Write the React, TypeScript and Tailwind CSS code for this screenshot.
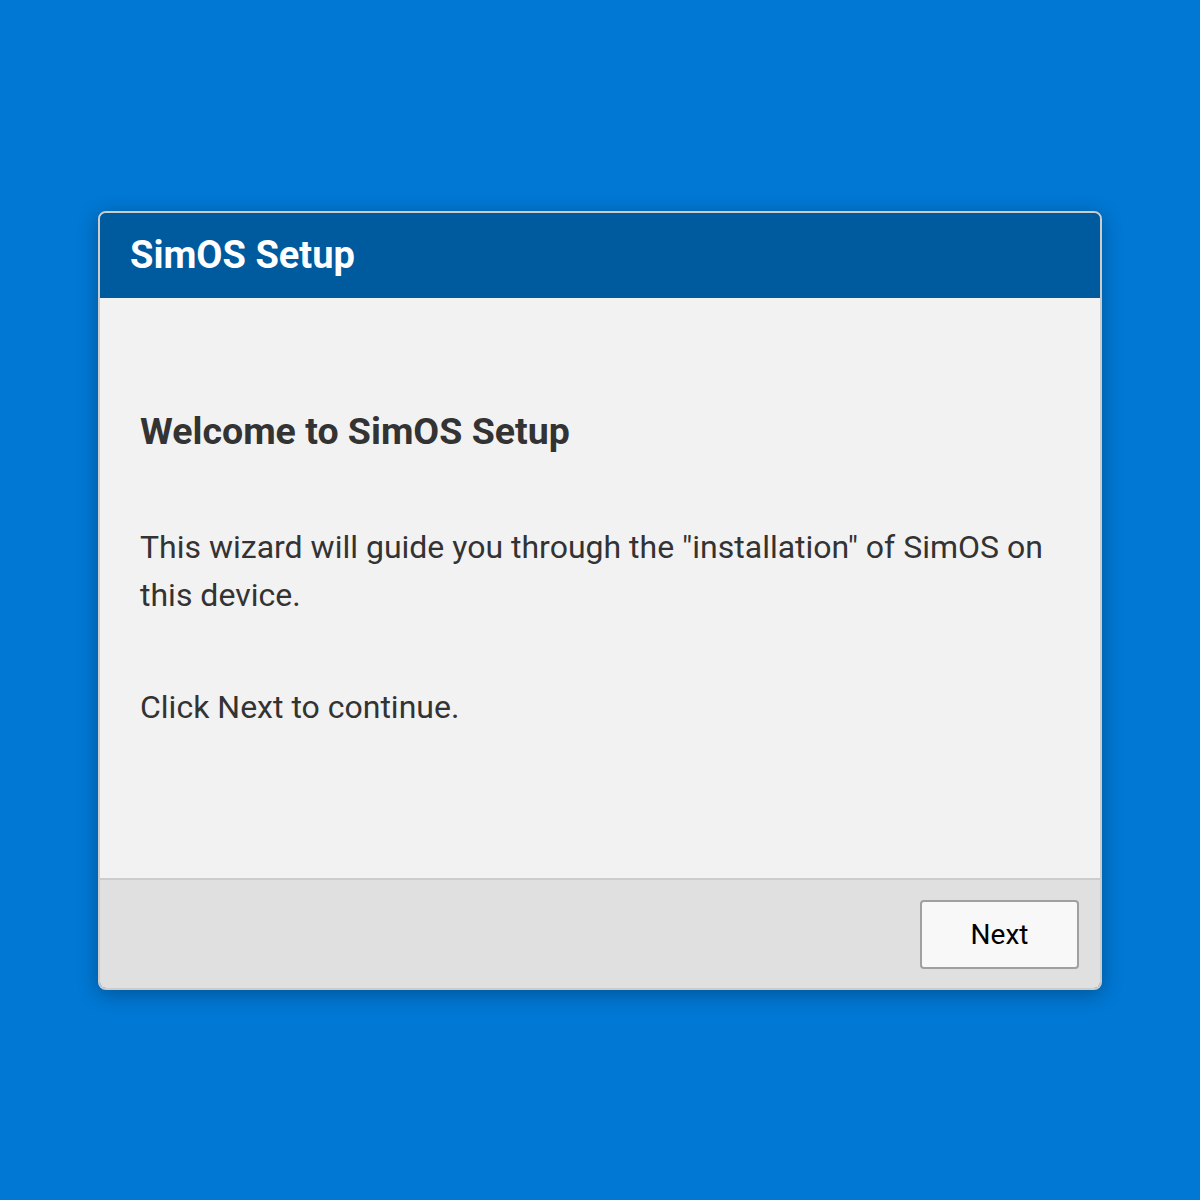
export default function App() {
  return (
    <div className="w-[1200px] h-[1200px] bg-[#0078d4] flex items-center justify-center" style={{ fontFamily: "Roboto, 'Noto Sans', sans-serif" }}>
      <div className="w-[1004px] border-2 border-[#cccccc] rounded-[8px] overflow-hidden shadow-[0_4px_20px_rgba(0,0,0,0.3)] flex flex-col">
        <div className="h-[85px] bg-[#005a9e] flex items-center px-[30px]">
          <h1 className="text-white text-[38px] font-bold leading-none">SimOS Setup</h1>
        </div>
        <div className="h-[582px] bg-[#f2f2f2] px-[40px] pt-[111px] text-[#333333] border-b-2 border-[#cccccc]">
          <h2 className="text-[37.5px] font-bold leading-[1.2]">Welcome to SimOS Setup</h2>
          <p className="mt-[69px] text-[32px] leading-[48px]">This wizard will guide you through the "installation" of SimOS on this device.</p>
          <p className="mt-[64px] text-[32px] leading-[48px]">Click Next to continue.</p>
        </div>
        <div className="h-[108px] bg-[#e0e0e0] flex items-center justify-end px-[21px]">
          <button className="w-[159px] h-[69px] mt-[2px] bg-[#f8f8f8] border-2 border-[#a0a0a0] rounded-[4px] text-[28px] text-black">Next</button>
        </div>
      </div>
    </div>
  );
}
